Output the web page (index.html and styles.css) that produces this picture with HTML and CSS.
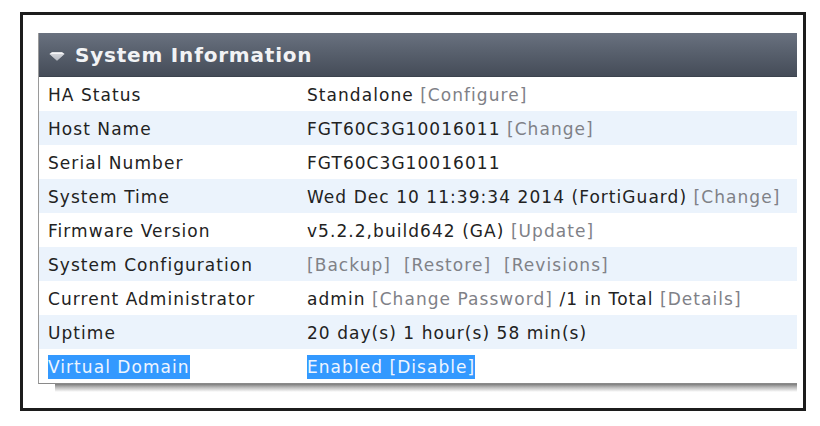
FILE: index.html
```html
<!DOCTYPE html>
<html>
<head>
<meta charset="utf-8">
<link rel="stylesheet" href="styles.css">
</head>
<body>
<div class="frame">
  <div class="panel">
    <div class="header">
      <svg class="tri" width="16" height="9" viewBox="0 0 16 9">
        <defs>
          <linearGradient id="g" x1="0" y1="0" x2="0" y2="1">
            <stop offset="0" stop-color="#f6f7f9"/>
            <stop offset="1" stop-color="#9fa4ad"/>
          </linearGradient>
        </defs>
        <polygon points="0.5,2 3,0.3 13,0.3 15.5,2 8,8.7" fill="url(#g)"/>
        <polygon points="0.5,2 15.5,2 8,8.7" fill="#c4c8cf" opacity="0.55"/>
        <polygon points="3,0.3 13,0.3 15.5,2 0.5,2" fill="#ffffff" opacity="0.5"/>
      </svg>
      <span class="title">System Information</span>
    </div>
    <div class="row"><div class="lbl">HA Status</div><div class="val">Standalone <span class="lnk">[Configure]</span></div></div>
    <div class="row alt"><div class="lbl">Host Name</div><div class="val">FGT60C3G10016011 <span class="lnk">[Change]</span></div></div>
    <div class="row"><div class="lbl">Serial Number</div><div class="val">FGT60C3G10016011</div></div>
    <div class="row alt"><div class="lbl">System Time</div><div class="val">Wed Dec 10 11:39:34 2014 (FortiGuard) <span class="lnk">[Change]</span></div></div>
    <div class="row"><div class="lbl">Firmware Version</div><div class="val">v5.2.2,build642 (GA) <span class="lnk">[Update]</span></div></div>
    <div class="row alt"><div class="lbl">System Configuration</div><div class="val"><span class="lnk">[Backup]</span>&nbsp; <span class="lnk">[Restore]</span>&nbsp; <span class="lnk">[Revisions]</span></div></div>
    <div class="row"><div class="lbl">Current Administrator</div><div class="val">admin <span class="lnk">[Change Password]</span> /1 in Total <span class="lnk">[Details]</span></div></div>
    <div class="row alt"><div class="lbl">Uptime</div><div class="val">20 day(s) 1 hour(s) 58 min(s)</div></div>
    <div class="row"><div class="lbl"><span class="sel">Virtual Domain</span></div><div class="val"><span class="sel">Enabled [Disable]</span></div></div>
  </div>
  <div class="shadow"></div>
</div>
</body>
</html>
```

FILE: styles.css
```css
html, body {
  margin: 0;
  padding: 0;
  background: #ffffff;
}
body {
  font-family: "DejaVu Sans", Verdana, sans-serif;
}
.frame {
  box-sizing: border-box;
  margin: 12px 0 0 20px;
  width: 786px;
  height: 399px;
  border: 3px solid #1c1c1c;
  padding: 18px 6px 0 15px;
}
.panel {
  border-left: 1px solid #9a9a9a;
  border-bottom: 1px solid #8a8a8a;
  background: #fff;
}
.shadow {
  margin-left: 17px;
  height: 8px;
  background: linear-gradient(to bottom, #7c7c7c 0%, #b8b8b8 40%, rgba(255, 255, 255, 0) 100%);
}
.header {
  height: 44px;
  display: flex;
  align-items: center;
  background: linear-gradient(to bottom, #69717f 0%, #58606d 45%, #454c58 100%);
  border-bottom: 1px solid #3c434e;
  box-sizing: border-box;
  padding-left: 10px;
}
.tri {
  display: block;
  margin-top: 3px;
  margin-right: 10px;
}
.title {
  color: #f2f3f5;
  font-weight: bold;
  font-size: 20px;
  letter-spacing: 0.8px;
}
.row {
  display: flex;
  box-sizing: border-box;
  height: 34px;
  padding-top: 2px;
  align-items: center;
  font-size: 17px;
  letter-spacing: 1.05px;
  color: #222;
}
.row.alt {
  background: #ebf3fc;
}
.lbl {
  width: 259px;
  padding-left: 9px;
  flex: none;
}
.val {
  white-space: nowrap;
}
.lnk {
  color: #7f8187;
}
.sel {
  display: inline-block;
  background: #3399ff;
  color: #eef5ff;
  height: 24px;
  line-height: 24px;
}
```
